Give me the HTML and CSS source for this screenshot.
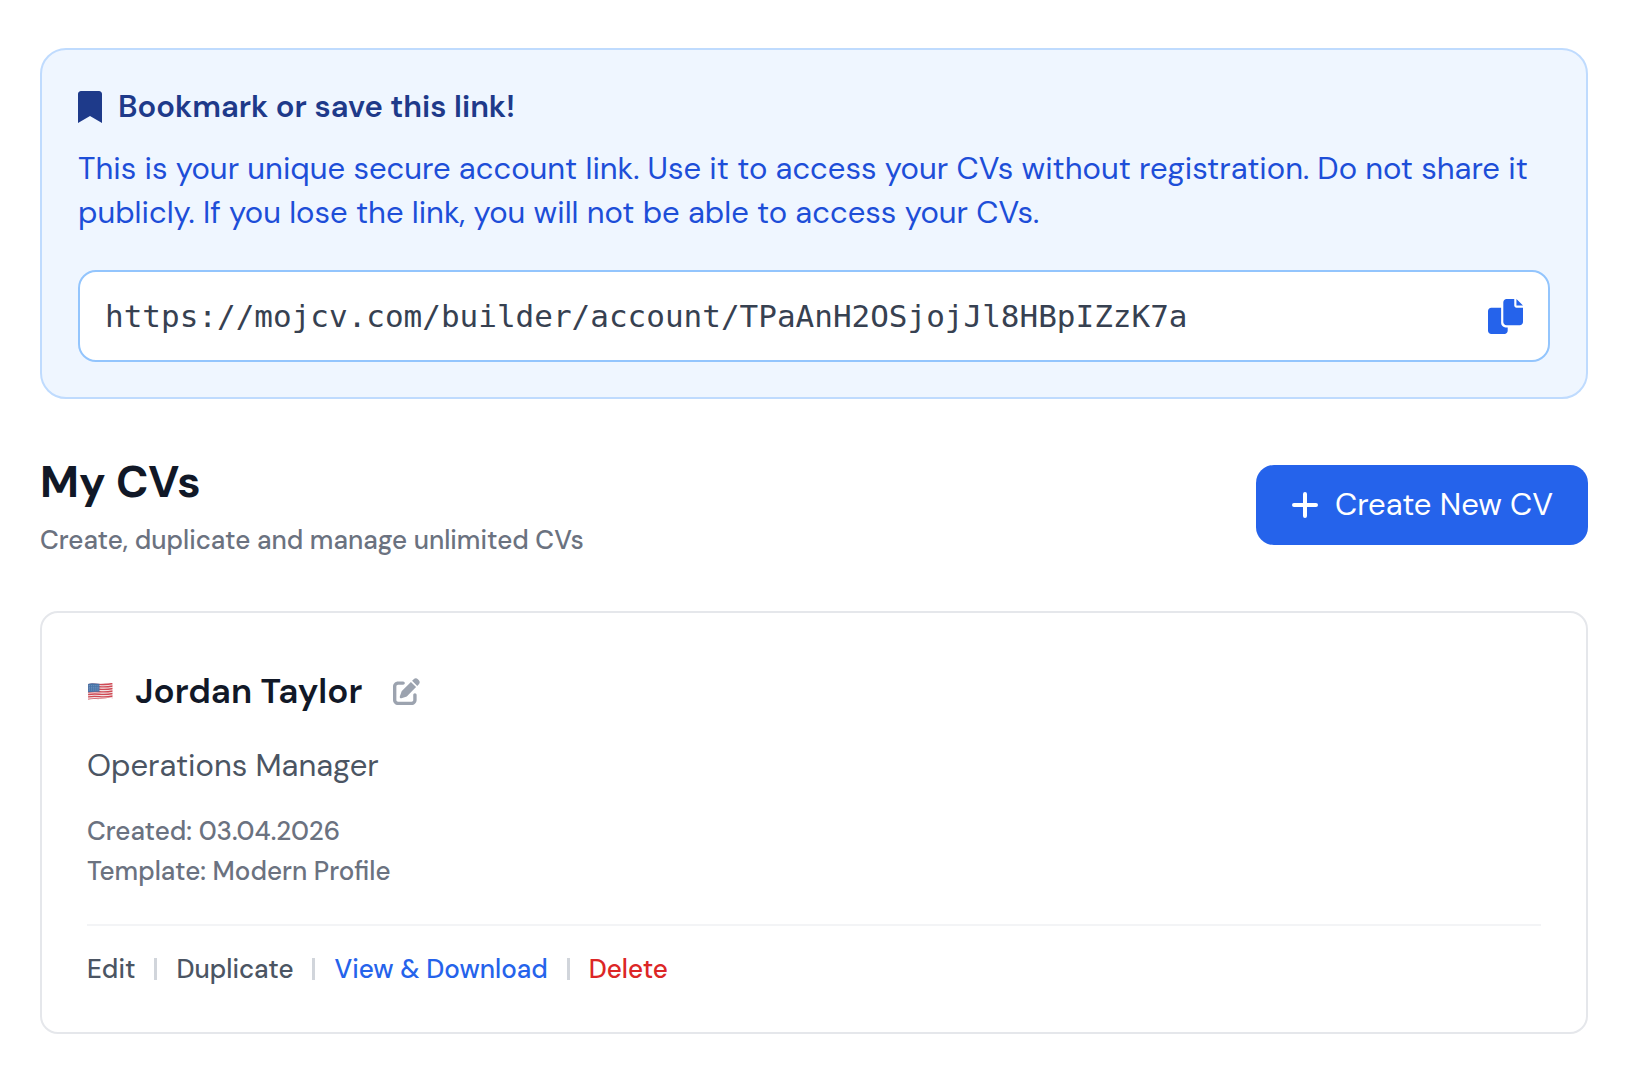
FILE: index.html
```html
<!DOCTYPE html>
<html lang="en">
<head>
<meta charset="utf-8">
<meta name="viewport" content="width=device-width, initial-scale=1">
<title>My CVs</title>
<link rel="stylesheet" href="styles.css">
</head>
<body>
<main class="page">
  <section class="notice">
    <h2 class="notice-title">
      <svg class="icon-bookmark" viewBox="0 0 384 512" aria-hidden="true"><path d="M0 512V48C0 21.49 21.49 0 48 0h288c26.51 0 48 21.49 48 48v464L192 400 0 512z"/></svg>
      <span>Bookmark or save this link!</span>
    </h2>
    <p class="notice-text">This is your unique secure account link. Use it to access your CVs without registration. Do not share it publicly. If you lose the link, you will not be able to access your CVs.</p>
    <div class="link-field">
      <input class="link-input" type="text" readonly aria-label="Account link" value="https://mojcv.com/builder/account/TPaAnH2OSjojJl8HBpIZzK7a">
      <button class="copy-button" type="button" aria-label="Copy link">
        <svg class="icon-copy" viewBox="0 0 512 512" aria-hidden="true"><path d="M384 96V0H272c-26.51 0-48 21.49-48 48v288c0 26.51 21.49 48 48 48h192c26.51 0 48-21.49 48-48V128h-95.1C398.4 128 384 113.6 384 96zM416 0v96h96L416 0zM192 352V128H48c-26.51 0-48 21.49-48 48v288c0 26.51 21.49 48 48 48h192c26.51 0 48-21.49 48-48v-48h-32C220.7 416 192 387.3 192 352z"/></svg>
      </button>
    </div>
  </section>

  <header class="list-header">
    <div>
      <h1 class="list-title">My CVs</h1>
      <p class="list-subtitle">Create, duplicate and manage unlimited CVs</p>
    </div>
    <button class="create-button" type="button">
      <svg class="icon-plus" viewBox="0 0 28 28" aria-hidden="true"><path d="M14 3v22M3 14h22"/></svg>
      <span>Create New CV</span>
    </button>
  </header>

  <article class="cv-card">
    <div class="cv-heading">
      <svg class="icon-flag" viewBox="0 0 25 18" role="img" aria-label="United States">
        <defs><clipPath id="flag-shape"><path d="M1 1.800C5 .3 9 2 13 1.500S21 .2 24.500 1v14.600C21 14.800 17 16 13 16.300S5 15.800 1 17z"/></clipPath></defs>
        <g clip-path="url(#flag-shape)">
          <path fill="#f1e2e4" d="M0 0h25v18H0z"/>
          <path class="flag-stripes" d="M0 2.300Q6 1.300 12 2T25 1.300M0 4.800Q6 3.800 12 4.400T25 3.700M0 7.200Q6 6.200 12 6.800T25 6.100M0 9.600Q6 8.600 12 9.200T25 8.500M0 12Q6 11 12 11.600T25 10.900M0 14.300Q6 13.300 12 14T25 13.300M0 16.700Q6 15.700 12 16.300T25 15.600"/>
          <path fill="#4674a8" d="M0 0h12v9.300Q6 8.800 0 9.900z"/>
          <path class="flag-stars" d="M2 3.500h9M2 5.500h9M2 7.500h9"/>
        </g>
      </svg>
      <h2 class="cv-name">Jordan Taylor</h2>
      <button class="rename-button" type="button" aria-label="Rename">
        <svg class="icon-pen" viewBox="0 0 512 512" aria-hidden="true"><path d="M471.6 21.7c-21.900-21.900-57.300-21.900-79.200 0L362.300 51.700l97.900 97.900 30.100-30.100c21.900-21.900 21.900-57.300 0-79.200L471.600 21.700zm-299.200 220c-6.100 6.100-10.800 13.600-13.500 21.900l-29.600 88.800c-2.900 8.600-.6 18.100 5.800 24.600s15.900 8.700 24.600 5.800l88.800-29.600c8.200-2.700 15.700-7.400 21.900-13.500L437.700 172.300 339.700 74.300 172.400 241.700zM96 64C43 64 0 107 0 160v256c0 53 43 96 96 96h256c53 0 96-43 96-96v-96c0-17.700-14.300-32-32-32s-32 14.300-32 32v96c0 17.700-14.300 32-32 32H96c-17.700 0-32-14.300-32-32V160c0-17.700 14.300-32 32-32h96c17.700 0 32-14.300 32-32s-14.300-32-32-32H96z"/></svg>
      </button>
    </div>
    <p class="cv-role">Operations Manager</p>
    <p class="cv-meta">Created: 03.04.2026</p>
    <p class="cv-meta">Template: Modern Profile</p>
    <div class="cv-actions">
      <button class="action" type="button">Edit</button>
      <span class="separator"></span>
      <button class="action" type="button">Duplicate</button>
      <span class="separator"></span>
      <a class="action action-view" href="#">View &amp; Download</a>
      <span class="separator"></span>
      <button class="action action-delete" type="button">Delete</button>
    </div>
  </article>
</main>
</body>
</html>
```
FILE: styles.css
```css
* {
  box-sizing: border-box;
}

body {
  margin: 0;
  background: #fff;
  color: #111827;
  font-family: "DM Sans", Inter, sans-serif;
}

h1,
h2,
p {
  margin: 0;
}

button,
input {
  margin: 0;
  padding: 0;
  border: 0;
  background: none;
  color: inherit;
  font: inherit;
}

button {
  cursor: pointer;
}

svg {
  display: block;
  flex: none;
  fill: currentColor;
}

.page {
  padding: 48px 50px 40px 40px;
}

.notice {
  padding: 35px 36px;
  border: 2px solid #bfdbfe;
  border-radius: 26px;
  background: #eff6ff;
}

.notice-title {
  display: flex;
  align-items: center;
  gap: 16px;
  color: #1e3a8a;
  font-size: 31px;
  font-weight: 600;
  line-height: 44px;
}

.icon-bookmark {
  width: 24px;
  height: 32px;
}

.notice-text {
  margin-top: 18px;
  color: #1d4ed8;
  font-size: 31px;
  line-height: 44px;
}

.link-field {
  display: flex;
  align-items: center;
  margin-top: 35px;
  padding: 22px 25px;
  border: 2px solid #93c5fd;
  border-radius: 18px;
  background: #fff;
}

.link-input {
  flex: 1;
  min-width: 0;
  height: 44px;
  outline: 0;
  color: #374151;
  font-family: "DejaVu Sans Mono", monospace;
  font-size: 31px;
}

.copy-button {
  color: #2563eb;
}

.icon-copy {
  width: 35px;
  height: 35px;
}

.list-header {
  display: flex;
  align-items: center;
  justify-content: space-between;
  margin: 52px 0;
}

.list-title {
  font-size: 44px;
  font-weight: 700;
  line-height: 62px;
}

.list-subtitle {
  margin-top: 8px;
  color: #6b7280;
  font-size: 26px;
  font-weight: 500;
  line-height: 38px;
}

.create-button {
  display: flex;
  align-items: center;
  gap: 16px;
  padding: 18px 35px;
  border-radius: 18px;
  background: #2563eb;
  color: #fff;
  font-size: 31px;
  line-height: 44px;
}

.icon-plus {
  width: 28px;
  height: 28px;
  fill: none;
  stroke: currentColor;
  stroke-width: 4;
  stroke-linecap: round;
}

.cv-card {
  padding: 44px 45px 43px;
  border: 2px solid #e5e7eb;
  border-radius: 18px;
}

.cv-heading {
  display: flex;
  align-items: center;
  min-height: 68px;
}

.icon-flag {
  width: 26px;
  height: 19px;
}

.flag-stripes {
  fill: none;
  stroke: #d04a55;
  stroke-width: 1.3;
}

.flag-stars {
  fill: none;
  stroke: #7f9bc4;
  stroke-width: 1;
  stroke-dasharray: 1 1;
}

.cv-name {
  margin: 0 31px 0 22px;
  font-size: 35px;
  font-weight: 600;
  line-height: 50px;
}

.rename-button {
  color: #9ca3af;
}

.icon-pen {
  width: 27px;
  height: 27px;
}

.cv-role {
  margin: 19px 0 23px;
  color: #4b5563;
  font-size: 31px;
  line-height: 44px;
}

.cv-meta {
  color: #6b7280;
  font-size: 26px;
  font-weight: 500;
  line-height: 40px;
}

.cv-actions {
  display: flex;
  align-items: center;
  gap: 19px;
  margin-top: 33px;
  padding-top: 23px;
  border-top: 2px solid #f3f4f6;
}

.action {
  color: #4b5563;
  font-size: 26px;
  font-weight: 500;
  line-height: 40px;
  text-decoration: none;
}

.action-view {
  color: #2563eb;
}

.action-delete {
  color: #dc2626;
}

.separator {
  width: 3px;
  height: 22px;
  background: #d1d5db;
}
```
